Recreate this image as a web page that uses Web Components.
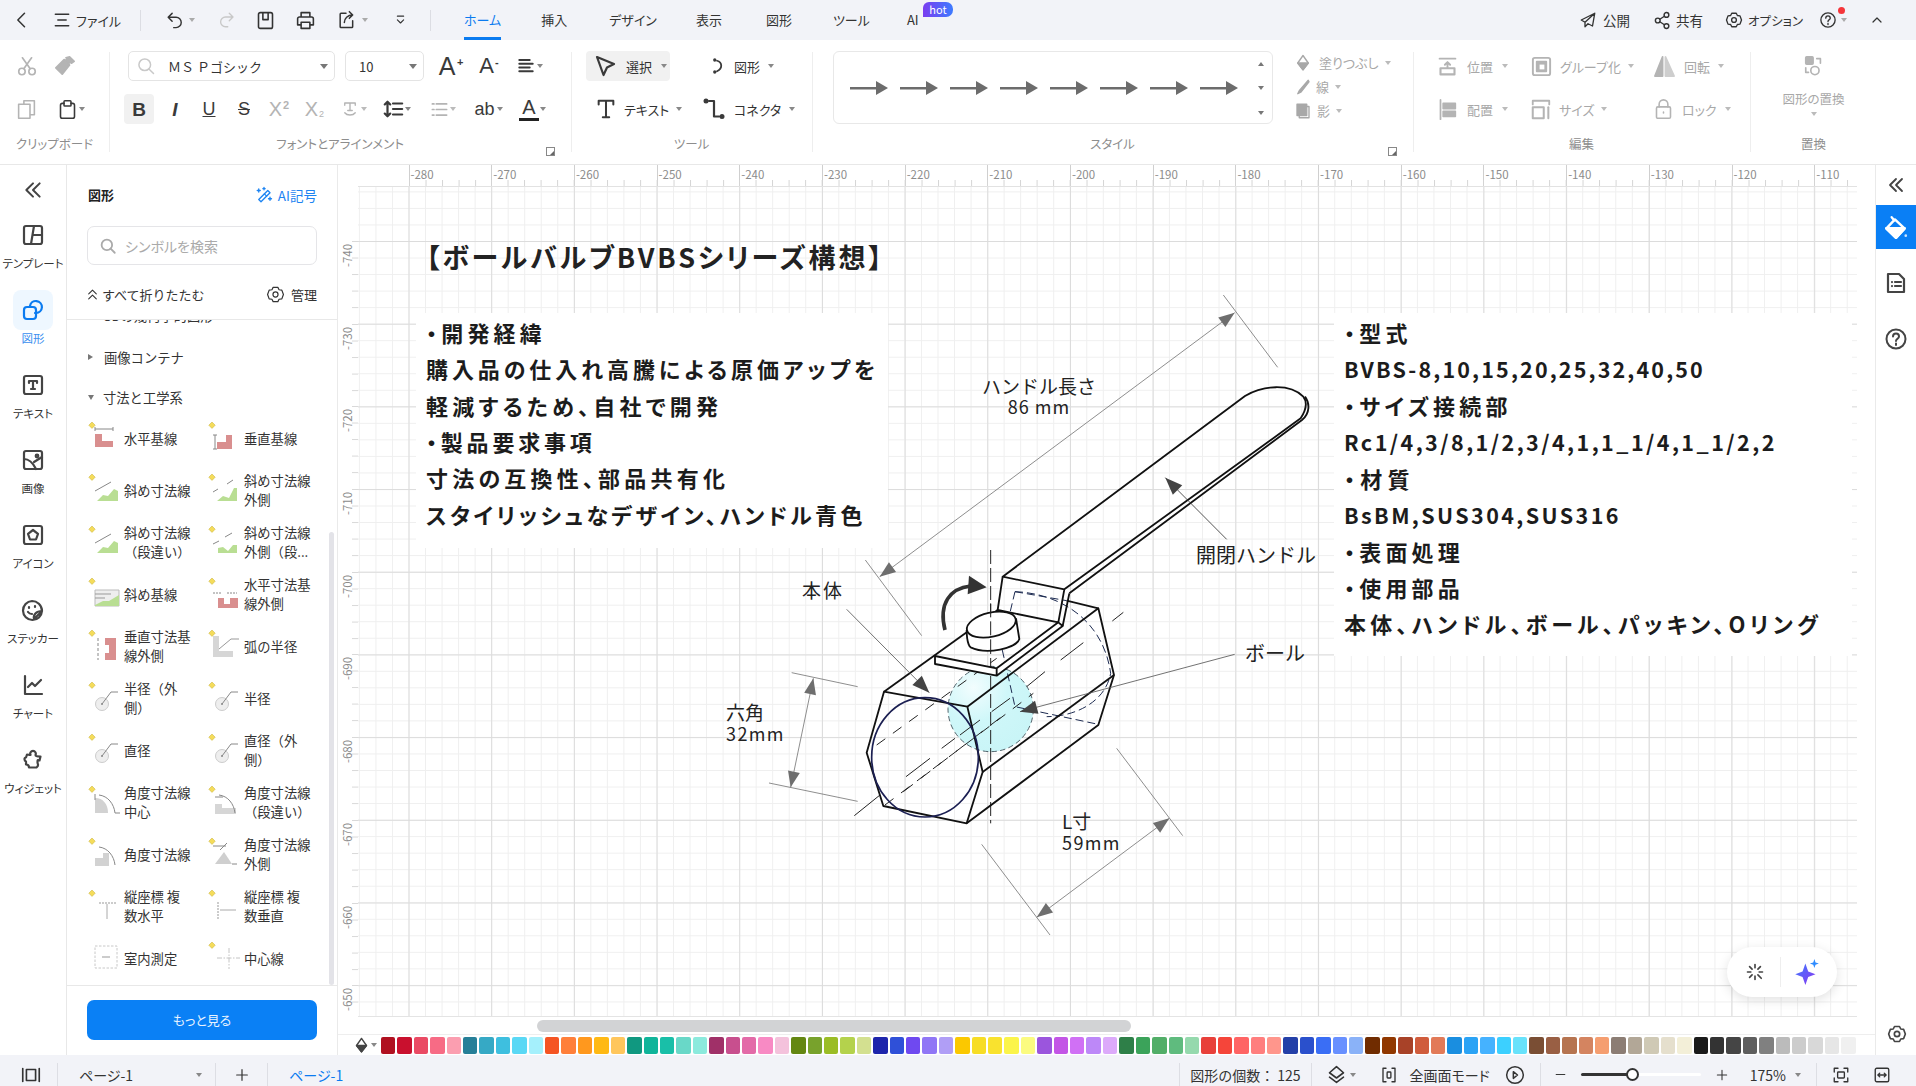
<!DOCTYPE html>
<html lang="ja">
<head>
<meta charset="utf-8">
<title>EdrawMax</title>
<style>
  html, body { margin: 0; height: 100%; overflow: hidden; background: #fff; }
  body { font-family: "Noto Sans CJK JP", "Noto Sans", sans-serif; font-size: 13px; color: #333; }
</style>
</head>
<body>
<app-shell>
  <title-bar slot="title"></title-bar>
  <ribbon-bar slot="ribbon">
    <rb-group w="109" title="クリップボード" first>
      <rb-row pad="16">
        <rb-tool w="38" icon="cut" size="22" dim></rb-tool>
        <rb-tool w="40" icon="brush" size="22" dim></rb-tool>
      </rb-row>
      <rb-row pad="16">
        <rb-tool w="41" icon="copy" size="21" dim></rb-tool>
        <rb-tool w="40" icon="paste" size="21" caret gap="1"></rb-tool>
      </rb-row>
    </rb-group>
    <rb-group w="462" title="フォントとアラインメント" expander>
      <rb-row pad="19">
        <rb-combo w="207" text="ＭＳ Ｐゴシック" search></rb-combo>
        <rb-combo w="79" text="10" style="margin-left:10px"></rb-combo>
        <rb-tool w="41" glyph="A" gs="font-size:25px;width:20px;" sup="+" style="margin-left:13px"></rb-tool>
        <rb-tool w="39" glyph="A" gs="font-size:22px;width:17px;" sup="-"></rb-tool>
        <rb-tool w="40" icon="lines" size="18" caret gap="2"></rb-tool>
      </rb-row>
      <rb-row pad="15">
        <rb-tool w="43" glyph="B" gs="font-size:19px;font-weight:700;" b="30"></rb-tool>
        <rb-tool w="33" glyph="I" gs="font-size:19px;font-style:italic;font-weight:700;width:16px;"></rb-tool>
        <rb-tool w="36" glyph="U" gs="font-size:18px;text-decoration:underline;width:18px;"></rb-tool>
        <rb-tool w="32" glyph="S" gs="font-size:18px;text-decoration:line-through;width:16px;"></rb-tool>
        <rb-tool w="36" glyph="X" gs="font-size:20px;width:15px;" sup="2" dim></rb-tool>
        <rb-tool w="37" glyph="X" gs="font-size:20px;width:15px;" sub="2" dim></rb-tool>
        <rb-tool w="41" icon="ttext" size="18" caret gap="2" dim></rb-tool>
        <rb-tool w="48" icon="spacing" size="22" caret gap="1"></rb-tool>
        <rb-tool w="43" icon="list" size="19" caret gap="1" dim></rb-tool>
        <rb-tool w="46" glyph="ab" gs="font-size:18px;width:23px;" caret gap="1"></rb-tool>
        <rb-tool w="34" glyph="A" gs="font-size:20px;width:20px;height:24px;line-height:21px;text-align:center;border-bottom:3px solid #222;box-sizing:border-box;" caret gap="1"></rb-tool>
      </rb-row>
    </rb-group>
    <rb-group w="241" title="ツール">
      <rb-row pad="15">
        <rb-tool w="122" icon="cursor" size="24" label="選択" caret b="84" gap="9" bx="7"></rb-tool>
        <rb-tool w="90" icon="curve" size="18" label="図形" caret gap="8"></rb-tool>
      </rb-row>
      <rb-row pad="24">
        <rb-tool w="107" icon="bigt" size="22" label="テキスト" caret gap="7"></rb-tool>
        <rb-tool w="90" icon="connector" size="24" label="コネクタ" caret gap="8"></rb-tool>
      </rb-row>
    </rb-group>
    <rb-group w="601" title="スタイル" expander>
      <style-gallery></style-gallery>
    </rb-group>
    <rb-group w="337" title="編集">
      <rb-row pad="24">
        <rb-tool w="93" icon="pos" size="21" label="位置" caret dim gap="9"></rb-tool>
        <rb-tool w="123" icon="group" size="23" label="グループ化" caret dim gap="7"></rb-tool>
        <rb-tool w="80" icon="rotate" size="23" label="回転" caret dim gap="8"></rb-tool>
      </rb-row>
      <rb-row pad="24">
        <rb-tool w="93" icon="align" size="21" label="配置" caret dim gap="9"></rb-tool>
        <rb-tool w="123" icon="size" size="22" label="サイズ" caret dim gap="7"></rb-tool>
        <rb-tool w="80" icon="lock" size="21" label="ロック" caret dim gap="8"></rb-tool>
      </rb-row>
    </rb-group>
    <rb-group w="127" title="置換">
      <replace-tool></replace-tool>
    </rb-group>
  </ribbon-bar>
  <left-rail slot="rail"></left-rail>
  <shape-panel slot="panel"></shape-panel>
  <draw-canvas slot="canvas">
    <note-box x="416" y="313" w="472" h="235" pt="1" lh="36.350">・開発経緯<br><span style="letter-spacing:3.900px">購入品の仕入れ高騰による原価アップを</span><br>軽減するため、自社で開発<br><span style="letter-spacing:3.800px">・製品要求事項</span><br>寸法の互換性、部品共有化<br><span style="letter-spacing:3.300px">スタイリッシュなデザイン、ハンドル青色</span></note-box>
    <note-box x="1334" y="313" w="518" h="343" pt="1" lh="36">・型式<br><span style="font-size:21.500px;letter-spacing:2.150px">BVBS-8,10,15,20,25,32,40,50</span><br>・サイズ接続部<br><span style="font-size:21.500px;letter-spacing:2.450px">Rc1/4,3/8,1/2,3/4,1,1_1/4,1_1/2,2</span><br><span style="letter-spacing:5.300px">・材質</span><br><span style="font-size:21.500px;letter-spacing:2.400px">BsBM,SUS304,SUS316</span><br>・表面処理<br>・使用部品<br>本体、ハンドル、ボール、パッキン、Oリング</note-box>
    <valve-figure></valve-figure>
    <cv-text x="426" y="256" size="27" bold ls="2.900">【ボールバルブBVBSシリーズ構想】</cv-text>
    <cv-text x="982" y="396" size="19" lh="20" center>ハンドル長さ<br><span style="font-size:18px;letter-spacing:1px">86 mm</span></cv-text>
    <cv-text x="1196" y="555" size="20">開閉ハンドル</cv-text>
    <cv-text x="802" y="589" size="19" ls="2">本体</cv-text>
    <cv-text x="1245" y="653" size="20">ボール</cv-text>
    <cv-text x="726" y="722" size="19" lh="21">六角<br><span style="font-size:18px;letter-spacing:1.400px">32mm</span></cv-text>
    <cv-text x="1062" y="831" size="19" lh="21">L寸<br><span style="font-size:18px;letter-spacing:1.400px">59mm</span></cv-text>
    <float-pill></float-pill>
  </draw-canvas>
  <color-palette slot="palette"></color-palette>
  <right-rail slot="right"></right-rail>
  <status-bar slot="status"></status-bar>
</app-shell>

<script>
const FONT = '"Noto Sans CJK JP", "Noto Sans", sans-serif';

// 24x24 icon set, stroke follows currentColor
const ICONS = {
  back: '<path d="M15 4l-8 8 8 8"/>',
  menu: '<path d="M4 5h16M7 12h10M4 19h16"/>',
  undo: '<path d="M9 3L4 8l5 5M4 8h10a6 6 0 010 13h-3"/>',
  redo: '<path d="M15 3l5 5-5 5M20 8H10a6 6 0 000 13h3"/>',
  save: '<path d="M6 3h12a2 2 0 012 2v14a2 2 0 01-2 2H6a2 2 0 01-2-2V5a2 2 0 012-2zM9 3v8h6V3"/>',
  print: '<path d="M7 8V3h10v5M7 17H3v-7a2 2 0 012-2h14a2 2 0 012 2v7h-4M7 14h10v7H7z"/>',
  exportx: '<path d="M20 13v7a1 1 0 01-1 1H6a1 1 0 01-1-1V5a1 1 0 011-1h6M10 15c0-5 4-9 10-9M16 2l4 4-4 4"/>',
  more: '<path d="M7 5h10M7 11l5 5 5-5"/>',
  send: '<path d="M21 3L3 12l5 3M21 3L8 15v6l4-4M21 3l-3 17-6-3"/>',
  share: '<circle cx="6" cy="12" r="3"/><circle cx="17" cy="5" r="3"/><circle cx="17" cy="19" r="3"/><path d="M8.600 10.400l5.800-3.800M8.600 13.600l5.800 3.800"/>',
  gear: '<path d="M9 3h6l1.500 3 3.500.5 2 5.500-2 5.500-3.500.5L15 21H9l-1.500-3-3.500-.5L2 12l2-5.500 3.500-.5z"/><circle cx="12" cy="12" r="3.200"/>',
  help: '<circle cx="12" cy="12" r="9.500"/><path d="M9 9.500a3 3 0 116 0c0 2-3 2.500-3 4.500M12 16.500v1.500"/>',
  up: '<path d="M6 15l6-6 6 6"/>',
  dbl: '<path d="M12 4l-8 8 8 8M20 4l-8 8 8 8"/>',
  dblup: '<path d="M5 11l7-7 7 7M5 20l7-7 7 7"/>',
  template: '<rect x="3" y="3" width="18" height="18" rx="2"/><path d="M13 3l-3 18M11.500 12H21"/>',
  shapes: '<rect x="3" y="9" width="12" height="12" rx="3"/><path d="M9 9V8a6 6 0 116 7h-1"/>',
  texti: '<rect x="3" y="3" width="18" height="18" rx="2"/><path d="M8 10V8h8v2M12 8v8M10 16h4"/>',
  image: '<rect x="3" y="3" width="18" height="18" rx="2"/><path d="M3 11c5 0 9 4 12 10M13 14l8-5"/><circle cx="16" cy="8" r="1.300"/>',
  iconi: '<rect x="3" y="3" width="18" height="18" rx="2"/><path d="M12 7l5 3.800-2 5.700H9l-2-5.700z"/>',
  sticker: '<path d="M21 13A9.500 9.500 0 1111 3c5 0 10 4 10 10l-8 8c-1-4 2-8 8-8z"/><path d="M7 14c1 1.500 2 2 4 2M8 9v1M14 8v1"/>',
  chart: '<path d="M4 3v18h17M7 14l4-4 3 3 6-6"/>',
  widget: '<path d="M9.500 7a2.800 2.800 0 115 0c0 1 2 1.500 5 1.500l-1 4c-2-1-2-.5-2 1.500 0 3 2 3-1 5.500H8c0-2-1-3-3-3v-3c-2-1-2-4 0-4l1-3c1.500 0 3.500 1 3.500 0z"/>',
  bucket: '<path d="M8 3l2.500 3M11 5l9 8.500-8 8.500-9-8.500z"/><path d="M3 13h17l-8 9z" fill="currentColor"/><circle cx="21" cy="20" r="1.200" fill="#cfe6ff" stroke="none"/>',
  doc: '<path d="M4 3h11l5 5v13H4z"/><path d="M8 11v.1M11 11h6M8 15v.1M11 15h6"/>',
  layers: '<path d="M12 3l8 7-8 6-8-6zM4 15l8 6 8-6"/>',
  full: '<path d="M8 3H4v18h4M16 3h4v18h-4"/><rect x="9.500" y="8" width="5" height="8" rx="1"/>',
  play: '<circle cx="12" cy="12" r="10"/><path d="M10 8l5 4-5 4z"/>',
  fit: '<path d="M3 8V3h5M16 3h5v5M21 16v5h-5M8 21H3v-5"/><rect x="7.500" y="8" width="9" height="8" rx="1"/>',
  widthfit: '<rect x="3" y="3" width="18" height="18" rx="2"/><path d="M7 12h10M9 9.500L6.500 12 9 14.500M15 9.500l2.500 2.500-2.500 2.500"/>',
  magic: '<path d="M12 3v4M12 17v4M3 12h4M17 12h4M5.500 5.500l3 3M15.500 15.500l4 4M18.500 5.500l-3 3M8.500 15.500l-3 3"/>',
  page: '<path d="M3 5v14M21 5v14M7 6h10v12H7z"/>',
  plus: '<path d="M12 4v16M4 12h16"/>',
  minus: '<path d="M4 12h16"/>',
  search: '<circle cx="10.500" cy="10.500" r="7"/><path d="M15.500 15.500L21 21"/>',
  wand: '<path d="M8 21l12-12-3-3-12 12z"/><path d="M12.500 10.500l3 3"/><path d="M5 4v4M3 6h4M20 15v4M18 17h4M12 2v3M10.500 3.500h3"/>',
  cut: '<circle cx="6.500" cy="18" r="3.500"/><circle cx="17.500" cy="18" r="3.500"/><path d="M8.500 15L17 3M15.500 15L7 3"/>',
  brush: '<path fill="currentColor" d="M17 2l5 5-3 2-1-1-2 1 1 2-8 10-7-7 9-9 2 1 1-2-1-1z"/>',
  copy: '<rect x="9" y="2" width="12" height="16"/><rect x="3" y="6" width="13" height="16" fill="#fff"/>',
  paste: '<path d="M8 5H6a2 2 0 00-2 2v13a2 2 0 002 2h12a2 2 0 002-2V7a2 2 0 00-2-2h-2"/><rect x="8" y="2" width="8" height="6" rx="1"/>',
  lines: '<path d="M3 4h14M3 9h18M3 14h14M3 19h18" stroke-width="2.500"/>',
  ttext: '<path d="M5 7V4h14v3M12 4v10M9 14h6M5 17c3 4 11 4 14 0"/>',
  spacing: '<path d="M6 5v14M3 7l3-3 3 3M3 17l3 3 3-3M12 6h10M12 12h10M12 18h10" stroke-width="2.400"/>',
  list: '<path d="M3 5h2M8 5h13M3 12h2M8 12h13M3 19h2M8 19h13" stroke-width="2.200"/>',
  cursor: '<path d="M4 3l17 7-7 3.500L10.500 21z" stroke-width="2.200"/>',
  curve: '<path d="M12 5c7 2 8 10 0 14" stroke-width="2.400"/><circle cx="9" cy="4" r="2.200" fill="currentColor" stroke="none"/><circle cx="9" cy="20" r="2.200" fill="currentColor" stroke="none"/>',
  bigt: '<path d="M4 7V3h16v4M12 3v18M8.500 21h7" stroke-width="2.200"/>',
  connector: '<path d="M7 4h5v15.500h5" stroke-width="2.200"/><circle cx="4" cy="4" r="2.500" fill="currentColor" stroke="none"/><circle cx="20" cy="19.500" r="2.500" fill="currentColor" stroke="none"/>',
  fill: '<path d="M12 2l7 10-7 9-7-9z"/><path d="M5 12h14l-7 9z" fill="currentColor"/>',
  line: '<path d="M19 3L7 17l-2 4 4-2L20 5z" fill="currentColor"/>',
  shadow: '<rect x="4" y="3" width="13" height="15" fill="currentColor"/><rect x="7" y="6" width="13" height="15"/>',
  pos: '<path d="M3 3h18M12 7v6M9 10l3-3 3 3" stroke-width="2.200"/><rect x="4" y="14" width="16" height="7" stroke-width="2.400"/>',
  group: '<rect x="3" y="3" width="18" height="18" rx="2" stroke-width="2"/><rect x="7" y="7" width="10" height="10" fill="currentColor"/><rect x="10" y="10" width="5" height="5" fill="#fff" stroke="none"/>',
  rotate: '<path d="M2 22L10 2v20z" fill="currentColor"/><path d="M22 22L13 2v20z" fill="currentColor" opacity=".65"/>',
  align: '<path d="M4 1v22" stroke-width="2"/><rect x="7" y="5" width="14" height="6" fill="currentColor"/><rect x="7" y="14" width="14" height="6" fill="currentColor"/>',
  size: '<path d="M3 3h18M3 3v4M21 3v4" stroke-width="2"/><rect x="3" y="10" width="12" height="12" stroke-width="2.200"/><path d="M20 10v12" stroke-width="2.200"/>',
  lock: '<path d="M7 9V6a5 5 0 0110 0v3"/><rect x="4" y="9" width="16" height="13" rx="1.500"/><path d="M12 15v1"/>',
  replace: '<rect x="3" y="2" width="8" height="8" rx="1" fill="currentColor"/><circle cx="13" cy="17" r="4.500"/><path d="M15 4h4v5M3 14v5h3"/>',
  sparkle: '<path fill="url(#sp)" stroke="none" d="M11 4l2.500 7L20 13.500 13.500 16 11 23l-2.500-7L2 13.500 8.500 11z"/><path fill="#2f8cff" stroke="none" d="M19 0l1 3 3 1-3 1-1 3-1-3-3-1 3-1z"/>'
};

class UiIcon extends HTMLElement {
  constructor() {
    super();
    this.attachShadow({ mode: 'open' });
  }
  connectedCallback() {
    const size = this.getAttribute('size') || 20;
    const sw = this.getAttribute('sw') || 1.8;
    const name = this.getAttribute('name');
    this.shadowRoot.innerHTML = `
      <style>:host { display: inline-flex; flex: none; width: ${size}px; height: ${size}px; } svg { display: block; }</style>
      <svg width="${size}" height="${size}" viewBox="0 0 24 24" fill="none" stroke="currentColor" stroke-width="${sw}" stroke-linecap="round" stroke-linejoin="round">
        <defs><linearGradient id="sp" x1="0" y1="0" x2="1" y2="1"><stop offset="0" stop-color="#3f7bff"/><stop offset="1" stop-color="#8a35f0"/></linearGradient></defs>
        ${ICONS[name] || ''}
      </svg>`;
  }
}

class AppShell extends HTMLElement {
  constructor() {
    super();
    this.attachShadow({ mode: 'open' }).innerHTML = `
      <style>
        :host { display: grid; width: 1916px; height: 1086px; grid-template-rows: 40px 125px 890px 31px; grid-template-columns: 67px 271px 1537px 41px; overflow: hidden; }
        .a { grid-column: 1 / -1; }
        .center { display: flex; flex-direction: column; min-width: 0; }
        ::slotted([slot=canvas]) { flex: none; }
      </style>
      <div class="a"><slot name="title"></slot></div>
      <div class="a"><slot name="ribbon"></slot></div>
      <slot name="rail"></slot>
      <slot name="panel"></slot>
      <div class="center"><slot name="canvas"></slot><slot name="palette"></slot></div>
      <slot name="right"></slot>
      <div class="a"><slot name="status"></slot></div>`;
  }
}

class TitleBar extends HTMLElement {
  constructor() {
    super();
    const ic = (n, s, ml, extra = '') => `<ui-icon name="${n}" size="${s}" style="margin-left:${ml}px;${extra}"></ui-icon>`;
    const car = (ml, c = '#999') => `<i class="car" style="margin-left:${ml}px;border-top-color:${c}"></i>`;
    this.attachShadow({ mode: 'open' }).innerHTML = `
      <style>
        :host { display: flex; align-items: center; height: 40px; background: #f2f3f8; font: 13px ${FONT}; font-feature-settings: "palt"; color: #333; position: relative; }
        .sep { width: 1px; height: 21px; background: #dcdde3; flex: none; }
        .car { width: 0; height: 0; border: 3px solid transparent; border-top: 4px solid #999; border-bottom: 0; flex: none; }
        .tab { flex: none; height: 40px; line-height: 40px; box-sizing: border-box; }
        .tab.on { color: #0b7bf0; border-bottom: 3px solid #0b7bf0; }
        .sp { flex: 1; }
        .hot { position: absolute; left: 923px; top: 2px; width: 30px; height: 15px; line-height: 14px; text-align: center; color: #fff; font-size: 11px; border-radius: 6px 7px 7px 0; background: linear-gradient(90deg,#7a3df0,#3d7bff); }
        .dot { position: absolute; left: 1838px; top: 7px; width: 7px; height: 7px; border-radius: 50%; background: #f5353a; }
        span { flex: none; }
      </style>
      ${ic('back', 20, 12)}
      ${ic('menu', 20, 20)}
      <span style="margin-left:4px">ファイル</span>
      <div class="sep" style="margin-left:19px"></div>
      ${ic('undo', 19, 24)}
      ${car(5, '#aaa')}
      ${ic('redo', 18, 23, 'color:#c8c8c8')}
      ${ic('save', 21, 19)}
      ${ic('print', 21, 19)}
      ${ic('exportx', 20, 20)}
      ${car(6, '#aaa')}
      ${ic('more', 15, 25)}
      <div class="sep" style="margin-left:22px"></div>
      <span class="tab on" style="margin-left:33px">ホーム</span>
      <span class="tab" style="margin-left:40px">挿入</span>
      <span class="tab" style="margin-left:42px">デザイン</span>
      <span class="tab" style="margin-left:39px">表示</span>
      <span class="tab" style="margin-left:44px">図形</span>
      <span class="tab" style="margin-left:41px">ツール</span>
      <span class="tab" style="margin-left:37px">AI</span>
      <div class="hot">hot</div>
      <div class="sp"></div>
      ${ic('send', 18, 0, 'margin-right:6px')}
      <span style="font-size:13.500px">公開</span>
      ${ic('share', 19, 23)}
      <span style="margin-left:4px;font-size:13.500px">共有</span>
      ${ic('gear', 18, 22)}
      <span style="margin-left:5px;font-size:12.500px">オプション</span>
      ${ic('help', 18, 16)}
      ${car(4, '#aaa')}
      <div class="dot"></div>
      ${ic('up', 16, 22)}
      <div style="width:31px;flex:none"></div>`;
  }
}

class RibbonBar extends HTMLElement {
  constructor() {
    super();
    this.attachShadow({ mode: 'open' }).innerHTML = `
      <style>:host { display: flex; height: 125px; box-sizing: border-box; border-bottom: 1px solid #e8e8e8; background: #fff; }</style>
      <slot></slot>`;
  }
}

class RbGroup extends HTMLElement {
  constructor() {
    super();
    this.attachShadow({ mode: 'open' });
  }
  connectedCallback() {
    const w = this.getAttribute('w');
    const title = this.getAttribute('title');
    this.removeAttribute('title');
    const line = this.hasAttribute('first') ? '' : '<div class="line"></div>';
    this.shadowRoot.innerHTML = `
      <style>
        :host { display: block; flex: none; width: ${w}px; position: relative; box-sizing: border-box; font: 13px ${FONT}; font-feature-settings: "palt"; }
        .line { position: absolute; left: 0; top: 12px; width: 1px; height: 100px; background: #eee; }
        .body { height: 96px; padding-top: 11px; box-sizing: border-box; display: flex; flex-direction: column; gap: 13px; }
        .t { text-align: center; color: #8d8d8d; font-size: 12.500px; line-height: 16px; }
        .x { position: absolute; right: 16px; bottom: 8px; width: 7px; height: 7px; border: 1px solid #888; }
        .x::after { content: ""; position: absolute; right: 0; bottom: 0; width: 4px; height: 4px; background: #666; clip-path: polygon(100% 0,100% 100%,0 100%); }
      </style>
      ${line}
      <div class="body"><slot></slot></div>
      <div class="t">${title}</div>
      ${this.hasAttribute('expander') ? '<div class="x"></div>' : ''}`;
  }
}

class RbRow extends HTMLElement {
  constructor() {
    super();
    this.attachShadow({ mode: 'open' });
  }
  connectedCallback() {
    this.shadowRoot.innerHTML = `
      <style>:host { display: flex; align-items: center; height: 30px; padding-left: ${this.getAttribute('pad') || 0}px; }</style>
      <slot></slot>`;
  }
}

class RbTool extends HTMLElement {
  constructor() {
    super();
    this.attachShadow({ mode: 'open' });
  }
  connectedCallback() {
    const a = n => this.getAttribute(n);
    const dim = this.hasAttribute('dim');
    const box = a('b');
    const glyph = a('glyph');
    const size = a('size') || 20;
    const art = glyph
      ? `<span class="g" style="${a('gs') || ''}">${glyph}</span>${a('sup') ? `<span class="sup">${a('sup')}</span>` : ''}${a('sub') ? `<span class="sub">${a('sub')}</span>` : ''}`
      : `<ui-icon name="${a('icon')}" size="${size}"></ui-icon>`;
    this.shadowRoot.innerHTML = `
      <style>
        :host { display: block; flex: none; width: ${a('w')}px; height: 30px; color: ${dim ? '#b4b4b4' : '#3a3a3a'}; }
        .b { display: flex; align-items: center; height: 30px; box-sizing: border-box; border-radius: 4px; gap: ${a('gap') || 5}px; ${box ? `width:${box}px;background:#f1f1f1;` : ''} ${a('bx') ? `padding-left:${a('bx')}px;` : ''} ${box && glyph ? 'justify-content:center;' : ''} }
        .g { display: inline-block; text-align: center; line-height: 1; flex: none; font-family: "Liberation Sans", sans-serif; }
        .sup, .sub { font: 9px "Liberation Sans", sans-serif; margin-left: -5px; flex: none; }
        .sup { align-self: flex-start; margin-top: 5px; font-size: 11px; font-weight: 700; }
        .sub { align-self: flex-end; margin-bottom: 5px; }
        .l { font-size: 13px; color: ${dim ? '#a8a8a8' : '#333'}; white-space: nowrap; }
        .c { width: 0; height: 0; border: 3px solid transparent; border-top: 4px solid ${dim ? '#bbb' : '#888'}; border-bottom: 0; }
      </style>
      <div class="b">${art}${a('label') ? `<span class="l">${a('label')}</span>` : ''}${this.hasAttribute('caret') ? '<i class="c"></i>' : ''}</div>`;
  }
}

class RbCombo extends HTMLElement {
  constructor() {
    super();
    this.attachShadow({ mode: 'open' });
  }
  connectedCallback() {
    const search = this.hasAttribute('search');
    this.shadowRoot.innerHTML = `
      <style>
        :host { display: block; flex: none; width: ${this.getAttribute('w')}px; height: 30px; }
        .f { display: flex; align-items: center; height: 30px; box-sizing: border-box; border: 1px solid #e4e4e4; border-radius: 5px; padding: 0 6px 0 ${search ? 7 : 13}px; color: #333; font-size: 13px; }
        ui-icon { color: #c9c9c9; margin-right: 12px; }
        span { flex: 1; font-feature-settings: normal; }
        i { width: 0; height: 0; border: 4px solid transparent; border-top: 5px solid #777; border-bottom: 0; }
      </style>
      <div class="f">${search ? '<ui-icon name="search" size="20"></ui-icon>' : ''}<span>${this.getAttribute('text')}</span><i></i></div>`;
  }
}

class StyleGallery extends HTMLElement {
  constructor() {
    super();
    const arrows = Array.from({ length: 8 }, () => `<svg width="38" height="14" viewBox="0 0 38 14"><path d="M0 6h26v2.500H0z" fill="#6c6c6c"/><path d="M25 0l12 7-12 7z" fill="#6c6c6c" transform="translate(1 0)"/></svg>`).join('');
    const side = (icon, label, gap) => `<div class="s"><ui-icon name="${icon}" size="18"></ui-icon><span style="margin-left:${gap}px">${label}</span><i class="c"></i></div>`;
    this.attachShadow({ mode: 'open' }).innerHTML = `
      <style>
        :host { display: flex; height: 73px; margin-left: 21px; color: #b4b4b4; }
        .box { width: 440px; height: 73px; box-sizing: border-box; border: 1px solid #e8e8e8; border-radius: 6px; display: flex; align-items: center; padding-left: 16px; position: relative; gap: 12px; flex: none; }
        .up, .dn, .pg { position: absolute; right: 8px; width: 0; height: 0; border: 3px solid transparent; }
        .up { top: 10px; border-bottom: 4px solid #777; border-top: 0; }
        .dn { top: 34px; border-top: 4px solid #777; border-bottom: 0; }
        .pg { top: 59px; border-top: 4px solid #777; border-bottom: 0; }
        .side { display: flex; flex-direction: column; margin-left: 21px; justify-content: space-between; height: 71px; font-size: 13px; color: #a8a8a8; }
        .s { display: flex; align-items: center; height: 23px; }
        .c { width: 0; height: 0; border: 3px solid transparent; border-top: 4px solid #bbb; border-bottom: 0; margin-left: 6px; }
      </style>
      <div class="box">${arrows}<i class="up"></i><i class="dn"></i><i class="pg"></i></div>
      <div class="side">${side('fill', '塗りつぶし', 7)}${side('line', '線', 4)}${side('shadow', '影', 5)}</div>`;
  }
}

class ReplaceTool extends HTMLElement {
  constructor() {
    super();
    this.attachShadow({ mode: 'open' }).innerHTML = `
      <style>
        :host { display: flex; flex-direction: column; align-items: center; height: 73px; padding-top: 4px; box-sizing: border-box; color: #b4b4b4; font-size: 12.500px; }
        span { margin-top: 13px; color: #a8a8a8; line-height: 18px; }
        i { width: 0; height: 0; border: 3px solid transparent; border-top: 4px solid #bbb; border-bottom: 0; margin-top: 4px; }
      </style>
      <ui-icon name="replace" size="22"></ui-icon><span>図形の置換</span><i></i>`;
  }
}

class LeftRail extends HTMLElement {
  constructor() {
    super();
    const items = [['template', 'テンプレート'], ['shapes', '図形', 1], ['texti', 'テキスト'], ['image', '画像'], ['iconi', 'アイコン'], ['sticker', 'ステッカー'], ['chart', 'チャート'], ['widget', 'ウィジェット']];
    this.attachShadow({ mode: 'open' }).innerHTML = `
      <style>
        :host { display: block; box-sizing: border-box; border-right: 1px solid #e8e8e8; background: #fff; font: 11.500px ${FONT}; font-feature-settings: "palt"; color: #333; }
        .col { display: flex; justify-content: center; height: 50px; align-items: center; }
        .it { height: 75px; display: flex; flex-direction: column; align-items: center; }
        .ic { width: 40px; height: 40px; border-radius: 8px; display: flex; align-items: center; justify-content: center; color: #444; }
        .lb { line-height: 16px; white-space: nowrap; }
        .on .ic { background: #eef7ff; color: #0b7bf0; }
        .on .lb { color: #3a8eef; }
      </style>
      <div class="col" style="color:#444"><ui-icon name="dbl" size="20" sw="2.400"></ui-icon></div>
      ${items.map(([n, l, on]) => `<div class="it ${on ? 'on' : ''}"><div class="ic"><ui-icon name="${n}" size="24" sw="2.200"></ui-icon></div><div class="lb">${l}</div></div>`).join('')}`;
  }
}

// thumbnails in the shape list: yellow handle + little dimension sketch
const THUMBS = {
  hbase: '<path d="M8 14h7v7h11v6H8z" fill="#d98f8f"/><path d="M8 9h18M8 7v4M26 7v4" stroke="#888" fill="none"/>',
  vbase: '<path d="M19 15h6v14H10v-7h9z" fill="#d98f8f"/><path d="M8 15v14M6 15h4M6 29h4" stroke="#888" fill="none"/>',
  slant: '<path d="M10 29l6-6 5 1 6-7 4 2v10z" fill="#b9de93"/><path d="M8 19l16-9" stroke="#888" fill="none"/>',
  slant2: '<path d="M10 29l6-5 6 2 5-10 3 0v13z" fill="#b9de93"/><path d="M6 20l5-3M20 12l6-4" stroke="#888" fill="none"/>',
  slant3: '<path d="M11 29v-5l5-1 5 4 5-6 4 0v8z" fill="#b9de93"/><path d="M6 20l6-3M18 13l7-4" stroke="#888" fill="none"/>',
  sbase: '<path d="M8 14h24v16H8z" fill="#eee" stroke="#bbb"/><path d="M8 29l8-4h6l10-6v11H8z" fill="#b9de93"/><path d="M8 18h16M8 22h10" stroke="#999"/>',
  hout: '<path d="M11 22h6v6h6v-6h8v10H11z" fill="#d98f8f"/><path d="M6 17h8M20 17h10" stroke="#888" stroke-dasharray="2 1"/>',
  vout: '<path d="M18 10h11v22H18v-7h4v-8h-4z" fill="#d98f8f"/><path d="M11 10v22" stroke="#888" stroke-dasharray="3 2"/>',
  arc: '<path d="M6 8h6v15h14v6H6z" fill="#d6d6d6"/><path d="M12 21L24 11h8" stroke="#999" fill="none"/>',
  rad: '<circle cx="15" cy="24" r="6.500" fill="#eee" stroke="#ccc"/><path d="M15 24l9-12h7M14 24h2M15 23v2" stroke="#888" fill="none"/>',
  ang: '<path d="M8 14c8 0 13 6 13 15H8z" fill="#d2d2d2"/><path d="M12 11c9 1 15 9 16 18" stroke="#888" fill="none"/><path d="M8 10v6M28 29h5" stroke="#888"/>',
  ang2: '<path d="M8 20h7v4h14v6H8z" fill="#d6d6d6"/><path d="M12 11c9 1 15 9 16 18M8 13h8" stroke="#888" fill="none"/>',
  ang3: '<path d="M8 22h8v-5h6v13H8z" fill="#d2d2d2"/><path d="M12 11c9 1 15 9 16 18" stroke="#888" fill="none"/>',
  tri: '<path d="M8 28l9-12 8 12z" fill="#cfcfcf"/><path d="M6 10h7l6 0M13 14l7-7M25 28h5" stroke="#888" fill="none"/>',
  ordh: '<path d="M12 15h17" stroke="#ccc" stroke-width="2" stroke-dasharray="2 1"/><path d="M20 16v15" stroke="#aaa"/>',
  ordv: '<path d="M11 14v18" stroke="#ccc" stroke-width="2" stroke-dasharray="2 1"/><path d="M13 22h16" stroke="#aaa"/>',
  room: '<rect x="8" y="6" width="22" height="22" fill="none" stroke="#c8c8c8" stroke-dasharray="2.500 1.500"/><path d="M15 17h8" stroke="#999"/>',
  center: '<path d="M10 18h23M22 8v21" stroke="#c4c4c4" stroke-dasharray="5 1.500 1.500 1.500"/>'
};

class ShapeItem extends HTMLElement {
  constructor() {
    super();
    this.attachShadow({ mode: 'open' });
  }
  connectedCallback() {
    const kind = this.getAttribute('kind');
    const diamond = this.hasAttribute('plain') ? '' : '<path d="M5 2l3.200 3.200L5 8.400 1.800 5.200z" fill="#f5dc5a" stroke="#cdb84a" stroke-width=".6"/>';
    this.shadowRoot.innerHTML = `
      <style>
        :host { display: flex; align-items: center; width: 120px; height: 52px; flex: none; }
        svg { flex: none; width: 37px; height: 36px; margin-left: 0; }
        div { width: 68px; font-size: 13.300px; line-height: 19px; color: #333; }
      </style>
      <svg viewBox="0 0 37 36">${diamond}${THUMBS[kind] || ''}</svg>
      <div><slot></slot></div>`;
  }
}

class ShapePanel extends HTMLElement {
  constructor() {
    super();
    const rows = [
      ['hbase', '水平基線'], ['vbase', '垂直基線'], ['slant', '斜め寸法線'], ['slant2', '斜め寸法線外側'],
      ['slant', '斜め寸法線（段違い）'], ['slant3', '斜め寸法線外側（段...'], ['sbase', '斜め基線'], ['hout', '水平寸法基線外側'],
      ['vout', '垂直寸法基線外側'], ['arc', '弧の半径'], ['rad', '半径（外側）'], ['rad', '半径'],
      ['rad', '直径'], ['rad', '直径（外側）'], ['ang', '角度寸法線中心'], ['ang2', '角度寸法線（段違い）'],
      ['ang3', '角度寸法線'], ['tri', '角度寸法線外側'], ['ordh', '縦座標 複数水平'], ['ordv', '縦座標 複数垂直'],
      ['room', '室内測定', 1], ['center', '中心線']
    ];
    this.attachShadow({ mode: 'open' }).innerHTML = `
      <style>
        :host { display: flex; flex-direction: column; background: #fff; font: 13px ${FONT}; color: #333; height: 890px; border-right: 1px solid #eaeaea; box-sizing: border-box; }
        .head { display: flex; justify-content: space-between; align-items: center; height: 61px; padding: 0 20px 2px 21px; box-sizing: border-box; flex: none; }
        .head b { font-weight: 700; font-size: 13px; color: #222; }
        .ai { display: flex; align-items: center; gap: 5px; color: #1d84f2; font-size: 13.500px; }
        .search { margin: 0 20px; flex: none; height: 39px; box-sizing: border-box; border: 1px solid #e5e5e8; border-radius: 7px; display: flex; align-items: center; padding-left: 11px; gap: 8px; color: #aaa; font-size: 14px; font-feature-settings: "palt"; }
        .fold { display: flex; align-items: center; justify-content: space-between; flex: none; height: 55px; padding: 4px 20px 0 19px; border-bottom: 1px solid #e8e8e8; box-sizing: border-box; font-size: 13px; }
        .fold span { display: flex; align-items: center; gap: 3px; }
        .list { flex: 1; min-height: 0; overflow: hidden; position: relative; }
        .cat { display: flex; align-items: center; height: 40px; padding-left: 21px; gap: 9px; font-size: 13.300px; }
        .cat.cut { margin-top: -25px; }
        .tri { width: 0; height: 0; border: 3.500px solid transparent; border-left: 5px solid #777; border-right: 0; margin-right: 2px; }
        .tri.dn { border: 3.500px solid transparent; border-top: 5px solid #777; border-bottom: 0; margin-right: 0; }
        .grid { display: flex; flex-wrap: wrap; padding-left: 20px; width: 250px; }
        .bar { position: absolute; right: 3px; top: 212px; width: 5px; height: 453px; border-radius: 3px; background: #e3e3e8; }
        .foot { height: 70px; flex: none; border-top: 1px solid #e8e8e8; box-sizing: border-box; padding: 14px 20px; }
        .more { height: 40px; line-height: 40px; text-align: center; border-radius: 7px; background: #0a80f5; color: #e8f3ff; font-size: 13px; font-feature-settings: "palt"; }
      </style>
      <div class="head"><b>図形</b><span class="ai"><ui-icon name="wand" size="18"></ui-icon>AI記号</span></div>
      <div class="search"><ui-icon name="search" size="18" sw="2.400"></ui-icon>シンボルを検索</div>
      <div class="fold"><span><ui-icon name="dblup" size="13" sw="2"></ui-icon>すべて折りたたむ</span><span style="gap:6px"><ui-icon name="gear" size="19" sw="1.500"></ui-icon>管理</span></div>
      <div class="list">
        <div class="cat cut"><i class="tri"></i>3Dの幾何学的図形</div>
        <div class="cat" style="margin-top:2px"><i class="tri"></i>画像コンテナ</div>
        <div class="cat"><i class="tri dn"></i>寸法と工学系</div>
        <div class="grid" style="margin-top:-5px">${rows.map(([k, t, plain]) => `<shape-item kind="${k}" ${plain ? 'plain' : ''}>${t}</shape-item>`).join('')}</div>
        <div class="bar"></div>
      </div>
      <div class="foot"><div class="more">もっと見る</div></div>`;
  }
}

class DrawCanvas extends HTMLElement {
  constructor() {
    super();
    const major = 82.7;
    let top = '';
    for (let v = -280; v <= -110; v += 10) top += `<div class="hc"><span>${v}</span></div>`;
    let left = '';
    for (let v = -740; v <= -650; v += 10) left += `<div class="vc"><span>${v}</span></div>`;
    this.attachShadow({ mode: 'open' }).innerHTML = `
      <style>
        :host { display: grid; position: relative; height: 852px; width: 1519px; grid-template-columns: 20px 1fr; grid-template-rows: 22px 1fr; overflow: hidden; background: #fff; font: 11.500px ${FONT}; color: #8c8c8c; }
        .top { display: flex; padding-left: 50.500px; overflow: hidden; border-bottom: 1px solid #e2e2e2; grid-column: 2; box-sizing: border-box; }
        .hc { flex: none; width: ${major}px; height: 21px; box-sizing: border-box; padding-left: 2px; line-height: 19px; background: linear-gradient(to right,#d4d4d4 1px,transparent 1px) 0 100% / 16.540px 6px repeat-x, linear-gradient(to right,#cfcfcf 1px,transparent 1px) 0 0 / ${major}px 100% no-repeat; }
        .left { padding-top: 50px; overflow: hidden; grid-row: 2; }
        .vc { height: ${major}px; box-sizing: border-box; padding-top: 2px; display: flex; justify-content: flex-start; background: linear-gradient(to bottom,#d8d8d8 1px,transparent 1px) 100% 4px / 6px 16.540px repeat-y; }
        .vc span { writing-mode: vertical-rl; transform: rotate(180deg); line-height: 18px; height: 28px; }
        .sheet { border-bottom: 1px solid #e4e4e4; background-color: #fff;
          background-image: linear-gradient(to right,#dcdcdc 1px,transparent 1px), linear-gradient(to bottom,#dcdcdc 1px,transparent 1px), linear-gradient(to right,#efefef 1px,transparent 1px), linear-gradient(to bottom,#efefef 1px,transparent 1px);
          background-size: ${major}px ${major}px, ${major}px ${major}px, 16.540px 16.540px, 16.540px 16.540px;
          background-position: 50.500px 54px; }
      </style>
      <div></div><div class="top">${top}</div>
      <div class="left">${left}</div><div class="sheet"></div>
      <slot></slot>`;
  }
}

class NoteBox extends HTMLElement {
  constructor() {
    super();
    this.attachShadow({ mode: 'open' });
  }
  connectedCallback() {
    const a = n => this.getAttribute(n);
    this.shadowRoot.innerHTML = `
      <style>
        :host { position: absolute; left: ${a('x') - 338}px; top: ${a('y') - 165}px; width: ${a('w')}px; height: ${a('h')}px; background: #fff; box-sizing: border-box; padding: ${a('pt')}px 0 0 10px; font: 700 22px/${a('lh')}px ${FONT}; letter-spacing: 4.200px; font-feature-settings: "palt"; color: #1c1c1c; white-space: nowrap; }
      </style>
      <slot></slot>`;
  }
}

class CvText extends HTMLElement {
  constructor() {
    super();
    this.attachShadow({ mode: 'open' });
  }
  connectedCallback() {
    const a = n => this.getAttribute(n);
    const lh = a('lh') ? `${a('lh')}px` : '1';
    this.shadowRoot.innerHTML = `
      <style>
        :host { position: absolute; left: ${a('x') - 338}px; top: ${a('y') - 165}px; transform: translateY(-50%); font: ${this.hasAttribute('bold') ? 700 : 400} ${a('size')}px/${lh} ${FONT}; letter-spacing: ${a('ls') || 0}px; ${this.hasAttribute('bold') ? 'font-feature-settings:"palt";' : ''} ${this.hasAttribute('center') ? 'text-align:center;' : ''} color: #222; white-space: nowrap; }
      </style>
      <slot></slot>`;
  }
}

class ValveFigure extends HTMLElement {
  constructor() {
    super();
    const dim = (x1, y1, x2, y2) => {
      const ang = Math.atan2(y2 - y1, x2 - x1);
      const head = (x, y, a) => {
        const l = 48, w = 18, c = Math.cos(a), s = Math.sin(a);
        return `<path d="M${x} ${y}L${x - l * c + w * s} ${y - l * s - w * c}L${x - l * c - w * s} ${y - l * s + w * c}z" fill="#6e6e6e"/>`;
      };
      return `<path d="M${x1} ${y1}L${x2} ${y2}" stroke="#777" stroke-width="2.500"/>${head(x1, y1, ang + Math.PI)}${head(x2, y2, ang)}`;
    };
    const ext = (x1, y1, x2, y2) => `<path d="M${x1} ${y1}L${x2} ${y2}" stroke="#777" stroke-width="2.500"/>`;
    const leader = (x1, y1, x2, y2, col = '#555') => {
      const a = Math.atan2(y2 - y1, x2 - x1), l = 52, w = 20, c = Math.cos(a), s = Math.sin(a);
      return `<path d="M${x1} ${y1}L${x2} ${y2}" stroke="${col}" stroke-width="2.500"/><path d="M${x2} ${y2}L${x2 - l * c + w * s} ${y2 - l * s - w * c}L${x2 - l * c - w * s} ${y2 - l * s + w * c}z" fill="#444"/>`;
    };
    // all coordinates at 3x, origin at page (700,560)
    this.attachShadow({ mode: 'open' }).innerHTML = `
      <style>
        :host { position: absolute; left: 0; top: 0; width: 1519px; height: 852px; pointer-events: none; }
        svg { display: block; }
      </style>
      <svg width="1519" height="852" viewBox="338 165 1519 852">
        <defs><radialGradient id="ball" cx=".3" cy=".25" r=".8"><stop offset="0" stop-color="#f2fdfe"/><stop offset=".5" stop-color="#cff7f9"/><stop offset="1" stop-color="#c9f5f7"/></radialGradient></defs>
        <g transform="translate(700 560) scale(.33333)" fill="none" stroke-linejoin="round">
          <circle cx="872" cy="447" r="128" fill="url(#ball)" stroke="#33464f" stroke-width="2.500" stroke-dasharray="16 10"/>
          <g stroke="#1c2a50" stroke-width="3" stroke-dasharray="24 12">
            <path d="M945 95L1100 122"/>
            <path d="M945 95L905 262L945 440L1190 492"/>
            <path d="M945 95C1080 100 1210 180 1232 340C1215 430 1120 470 1040 470"/>
          </g>
          <g stroke="#222" stroke-width="3">
            <path d="M530 555L890 295" stroke-dasharray="32 28"/>
            <path d="M555 735L1000 400" stroke-dasharray="32 28"/>
            <path d="M610 695L905 470" stroke-dasharray="36 30"/>
            <path d="M463 767L540 705M618 650L690 595M725 565L765 535M780 525L840 480M875 455L930 415M980 380L1035 335M1082 300L1150 248M1237 183L1270 157"/>
            <path d="M872 -30V790" stroke-dasharray="42 12"/>
          </g>
          <g stroke="#111" stroke-width="5.500">
            <path d="M552 395L802 440L848 636L800 790L550 738L500 578z"/>
            <path d="M552 395L893 150"/>
            <path d="M802 440L1195 145L1242 345L1195 495L800 790"/>
            <path d="M848 636L1242 345"/>
            <path d="M1100 122L1195 145"/>
            <path d="M908 50L1635 -492C1690 -525 1770 -530 1810 -490C1825 -470 1815 -445 1802 -425L1093 88zM908 50L1093 88M908 50L893 150L1075 187L1093 88M1108 100L1088 198"/>
            <path d="M1108 100L1806 -420C1830 -440 1830 -470 1815 -490"/>
            <path d="M705 288L890 325L1075 187L1088 198L890 347L705 312zM890 325V347" fill="#fff"/>
            <path d="M800 210C800 255 812 262 812 262C860 285 950 265 958 237L948 175" fill="#fff"/>
            <ellipse cx="874" cy="194" rx="75" ry="36" transform="rotate(-13 874 194)" fill="#fff"/>
          </g>
          <path d="M872 130V275" stroke="#222" stroke-width="3" stroke-dasharray="42 12"/>
          <ellipse cx="675" cy="592" rx="160" ry="179" stroke="#1b1f52" stroke-width="5"/>
          <path d="M735 210C715 130 750 85 812 78" stroke="#333" stroke-width="11"/>
          <path d="M860 82L807 47L803 103z" fill="#333"/>
          ${ext(1570, -795, 1733, -578)}
          ${ext(496, 0, 665, 227)}
          ${dim(539, 50, 1604, -742)}
          ${ext(1250, 565, 1448, 827)}
          ${ext(845, 853, 1050, 1125)}
          ${dim(1010, 1072, 1408, 775)}
          ${ext(275, 338, 473, 380)}
          ${ext(207, 669, 473, 724)}
          ${dim(272, 682, 340, 355)}
          ${leader(440, 148, 688, 398)}
          ${leader(1604, 283, 960, 455)}
          ${leader(1580, -62, 1396, -247, '#333')}
        </g>
      </svg>`;
  }
}

class FloatPill extends HTMLElement {
  constructor() {
    super();
    this.attachShadow({ mode: 'open' }).innerHTML = `
      <style>
        :host { position: absolute; right: 20px; bottom: 20px; width: 110px; height: 50px; border-radius: 25px; background: #fff; box-shadow: 0 3px 12px rgba(0,0,0,.12); display: flex; align-items: center; box-sizing: border-box; padding-left: 18px; color: #444; }
        .s { width: 1px; height: 30px; background: #eee; margin: 0 12px 0 15px; }
      </style>
      <ui-icon name="magic" size="20" sw="2"></ui-icon><div class="s"></div><ui-icon name="sparkle" size="27"></ui-icon>`;
  }
}

class ColorPalette extends HTMLElement {
  constructor() {
    super();
    const colors = '#b01020 #c9102e #ea4a64 #f76b85 #fb9eb0 #267f98 #36a9c5 #3ebfdf #5ad8f5 #a5f0fc #f55423 #ff7f3a #ff981e #ffb914 #ffc65c #109880 #10b49a #19bfa8 #69d8c8 #8ceadd #a03068 #c84f8e #e36aa8 #f88ac4 #f4c2dc #648712 #78a22c #9bbd26 #b4d24c #d3e090 #1e25ac #2f50d8 #6f49f0 #9076f6 #b09ef6 #fbc800 #f7dd26 #f9e22e #fbf44a #fbfb80 #9b55dd #c355e6 #d070f5 #bd88f8 #dcaafa #2e7f48 #3ba35a #52ae68 #5fbb7e #95d9ad #e8403a #f5453a #ff6464 #ff7e7e #ff968c #2440a8 #2a50cc #3a6ef5 #6890ff #8ab2f8 #702c00 #913800 #a84228 #d05c3c #e27a58 #1a8ee0 #2ba3f5 #45b2ff #3cd0ff #68e2fb #7a4e34 #995f44 #b67450 #d48460 #f59e70 #8c7d74 #b2a797 #cfc9b5 #e5dfcd #f3efd8 #1a1a1a #333333 #454545 #5e5e5e #808080 #bbbbbb #cccccc #d8d8d8 #e6e6e6 #f0f0f0 #ffffff'.split(' ');
    this.attachShadow({ mode: 'open' }).innerHTML = `
      <style>
        :host { display: block; flex: none; height: 38px; background: #fff; }
        .scroll { height: 18px; position: relative; border-bottom: 1px solid #eee; box-sizing: border-box; }
        .thumb { position: absolute; left: 199px; top: 3px; width: 594px; height: 12px; border-radius: 6px; background: #d2d3d5; }
        .row { display: flex; align-items: center; height: 20px; padding-left: 15px; }
        .bk { display: flex; align-items: center; gap: 1px; width: 28px; flex: none; color: #444; }
        .bk i { width: 0; height: 0; border: 3px solid transparent; border-top: 4px solid #888; border-bottom: 0; }
        .sw { flex: none; width: 14.420px; height: 17px; margin-right: 2px; border-radius: 2px; }
      </style>
      <div class="scroll"><div class="thumb"></div></div>
      <div class="row"><div class="bk"><ui-icon name="fill" size="17" sw="2"></ui-icon><i></i></div>${colors.map(c => `<div class="sw" style="background:${c}"></div>`).join('')}</div>`;
  }
}

class RightRail extends HTMLElement {
  constructor() {
    super();
    this.attachShadow({ mode: 'open' }).innerHTML = `
      <style>
        :host { display: flex; flex-direction: column; align-items: center; background: #fff; height: 890px; position: relative; color: #444; box-sizing: border-box; border-left: 1px solid #eaeaea; }
        .top { height: 40px; display: flex; align-items: center; }
        .on { width: 100%; height: 44px; background: #0a7ff5; color: #fff; display: flex; align-items: center; justify-content: center; }
        .it { height: 56px; display: flex; align-items: center; }
        .gear { position: absolute; left: 11px; top: 859px; }
      </style>
      <div class="top"><ui-icon name="dbl" size="18" sw="2.400"></ui-icon></div>
      <div class="on"><ui-icon name="bucket" size="26" sw="2.200"></ui-icon></div>
      <div class="it" style="margin-top:6px"><ui-icon name="doc" size="24" sw="2.200"></ui-icon></div>
      <div class="it"><ui-icon name="help" size="24" sw="2"></ui-icon></div>
      <ui-icon class="gear" name="gear" size="20" sw="2"></ui-icon>`;
  }
}

class VerticalScroll extends HTMLElement {
  constructor() {
    super();
    this.attachShadow({ mode: 'open' }).innerHTML = `
      <style>
        :host { position: absolute; left: 1519px; top: 0; width: 17px; height: 852px; background: #fff; border-left: 1px solid #eee; box-sizing: border-box; }
        div { position: absolute; left: 2px; top: 231px; width: 12px; height: 159px; border-radius: 6px; background: #d2d3d5; }
      </style>
      <div></div>`;
  }
}

class StatusBar extends HTMLElement {
  constructor() {
    super();
    const sep = ml => `<div class="sep" style="margin-left:${ml}px"></div>`;
    const ic = (n, s, ml, extra = '') => `<ui-icon name="${n}" size="${s}" style="margin-left:${ml}px;${extra}"></ui-icon>`;
    const car = ml => `<i class="car" style="margin-left:${ml}px"></i>`;
    this.attachShadow({ mode: 'open' }).innerHTML = `
      <style>
        :host { display: flex; align-items: center; height: 31px; box-sizing: border-box; padding-top: 8px; background: #f2f3f8; font: 14px ${FONT}; font-feature-settings: "palt"; color: #333; }
        .sep { width: 1px; height: 23px; background: #dddee4; flex: none; }
        .car { width: 0; height: 0; border: 3.500px solid transparent; border-top: 4px solid #888; border-bottom: 0; flex: none; }
        span { flex: none; white-space: nowrap; }
        .sp { flex: 1; }
        .sl { position: relative; width: 120px; height: 3px; background: linear-gradient(90deg,#333 42%,#fff 42%); margin-left: 14px; flex: none; border-radius: 2px; }
        .sl i { position: absolute; left: 45px; top: -5px; width: 9px; height: 9px; border: 2px solid #333; border-radius: 50%; background: #fff; }
      </style>
      ${ic('page', 22, 20)}
      ${sep(15)}
      <span style="margin-left:21px">ページ-1</span>
      ${car(63)}
      ${sep(13)}
      ${ic('plus', 16, 18)}
      ${sep(17)}
      <span style="margin-left:21px;color:#0b7bf0">ページ-1</span>
      <div class="sp"></div>
      ${sep(0)}
      <span style="margin-left:10px;font-feature-settings:normal">図形の個数： 125</span>
      ${sep(10)}
      ${ic('layers', 21, 14)}
      ${car(3)}
      ${ic('full', 18, 24)}
      <span style="margin-left:12px">全画面モード</span>
      ${ic('play', 20, 15)}
      ${sep(15)}
      ${ic('minus', 13, 13)}
      <div class="sl"><i></i></div>
      ${ic('plus', 14, 14)}
      <span style="margin-left:21px;">175%</span>
      ${car(9)}
      ${sep(15)}
      ${ic('fit', 18, 15)}
      ${ic('widthfit', 18, 23)}
      <div style="width:25px;flex:none"></div>`;
  }
}

const defs = {
  'ui-icon': UiIcon, 'app-shell': AppShell, 'title-bar': TitleBar, 'ribbon-bar': RibbonBar,
  'rb-group': RbGroup, 'rb-row': RbRow, 'rb-tool': RbTool, 'rb-combo': RbCombo,
  'style-gallery': StyleGallery, 'replace-tool': ReplaceTool, 'left-rail': LeftRail,
  'shape-item': ShapeItem, 'shape-panel': ShapePanel, 'draw-canvas': DrawCanvas,
  'note-box': NoteBox, 'cv-text': CvText, 'valve-figure': ValveFigure, 'float-pill': FloatPill,
  'color-palette': ColorPalette, 'right-rail': RightRail, 'v-scroll': VerticalScroll, 'status-bar': StatusBar
};
for (const [name, cls] of Object.entries(defs)) customElements.define(name, cls);

document.querySelector('draw-canvas').appendChild(document.createElement('v-scroll'));
</script>
</body>
</html>
